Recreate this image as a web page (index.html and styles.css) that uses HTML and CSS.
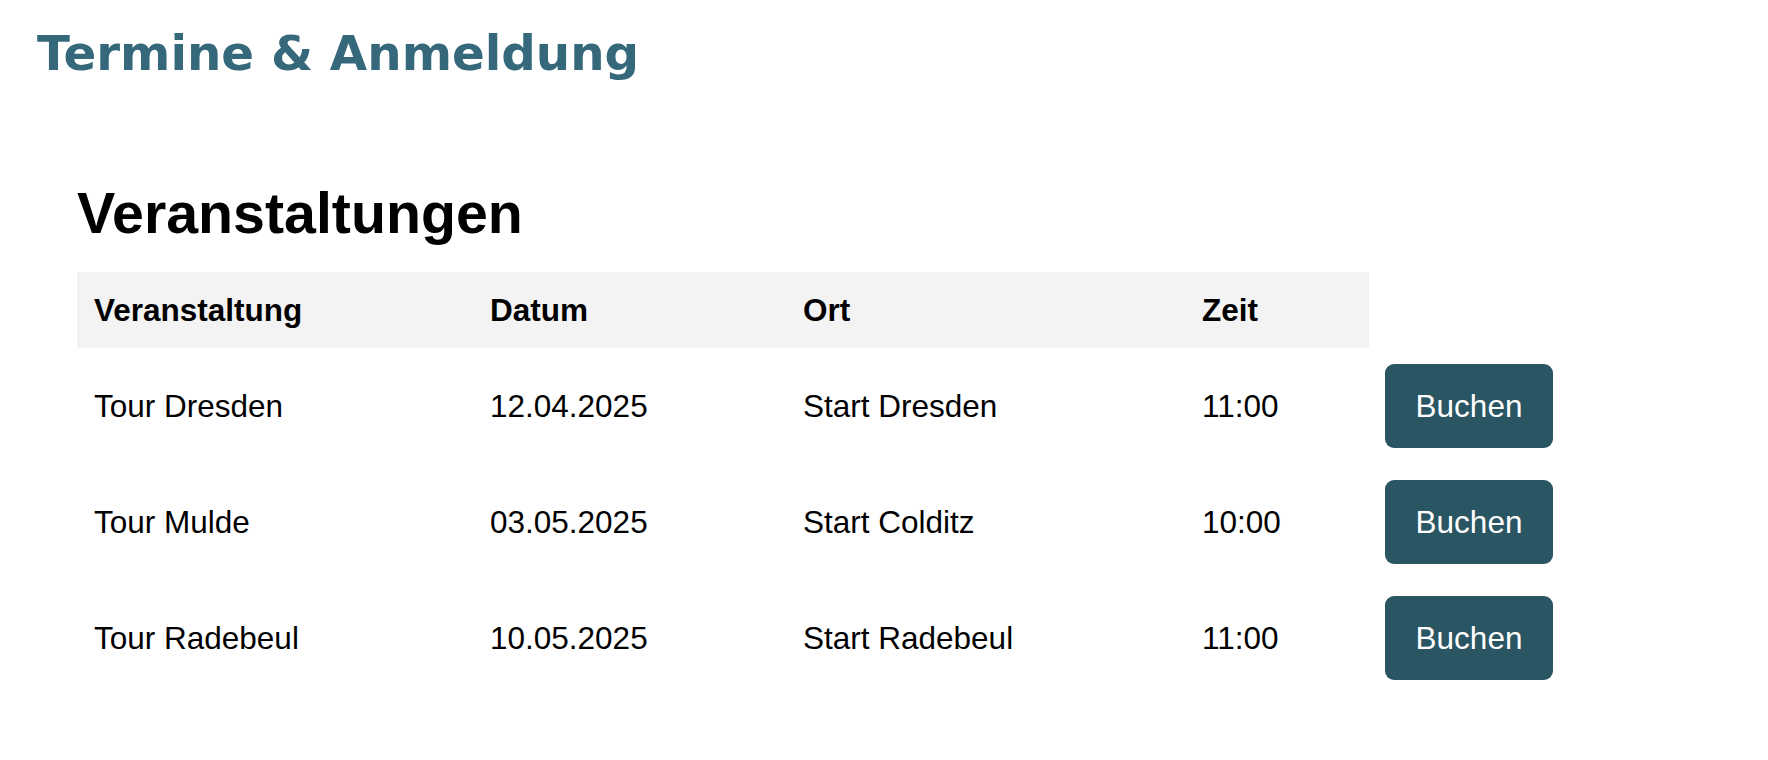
FILE: index.html
```html
<!DOCTYPE html>
<html lang="de">
<head>
<meta charset="utf-8">
<title>Termine &amp; Anmeldung</title>
<link rel="stylesheet" href="styles.css">
</head>
<body>
<header class="site-header">
  <h1 class="site-title">Termine &amp; Anmeldung</h1>
</header>
<main class="events">
  <h2 class="events-title">Veranstaltungen</h2>
  <table class="events-table">
    <colgroup>
      <col class="c1"><col class="c2"><col class="c3"><col class="c4"><col class="c5">
    </colgroup>
    <thead>
      <tr>
        <th>Veranstaltung</th>
        <th>Datum</th>
        <th>Ort</th>
        <th>Zeit</th>
        <th class="blank"></th>
      </tr>
    </thead>
    <tbody>
      <tr>
        <td>Tour Dresden</td>
        <td>12.04.2025</td>
        <td>Start Dresden</td>
        <td>11:00</td>
        <td class="action"><button class="book-btn">Buchen</button></td>
      </tr>
      <tr>
        <td>Tour Mulde</td>
        <td>03.05.2025</td>
        <td>Start Colditz</td>
        <td>10:00</td>
        <td class="action"><button class="book-btn">Buchen</button></td>
      </tr>
      <tr>
        <td>Tour Radebeul</td>
        <td>10.05.2025</td>
        <td>Start Radebeul</td>
        <td>11:00</td>
        <td class="action"><button class="book-btn">Buchen</button></td>
      </tr>
    </tbody>
  </table>
</main>
</body>
</html>
```

FILE: styles.css
```css
html, body {
  margin: 0;
  padding: 0;
  background: #ffffff;
}

body {
  font-family: "Liberation Sans", Arial, sans-serif;
  color: #000;
}

.site-header {
  padding: 25px 0 0 37px;
}

.site-title {
  margin: 0;
  font-family: "DejaVu Sans", sans-serif;
  font-weight: bold;
  font-size: 48.3px;
  line-height: 56px;
  color: #35687a;
}

.events {
  padding: 100px 0 0 77px;
}

.events-title {
  margin: 0 0 26px 0;
  font-family: "Liberation Sans", Arial, sans-serif;
  font-weight: bold;
  font-size: 57.3px;
  line-height: 65px;
}

.events-table {
  border-collapse: collapse;
  border-spacing: 0;
  table-layout: fixed;
  width: 1492px;
  font-size: 31.5px;
  line-height: 36px;
}

.c1 { width: 396px; }
.c2 { width: 313px; }
.c3 { width: 399px; }
.c4 { width: 184px; }
.c5 { width: 200px; }

.events-table th {
  background: #f3f3f3;
  font-weight: bold;
  text-align: left;
  padding: 20px 17px;
  vertical-align: middle;
}

.events-table th.blank {
  background: transparent;
}

.events-table td {
  padding: 16px 17px;
  text-align: left;
  vertical-align: middle;
}

.events-table td.action {
  padding-left: 16px;
}

.book-btn {
  display: block;
  border: none;
  margin: 0;
  background: #2a5562;
  color: #ffffff;
  font-family: "Liberation Sans", Arial, sans-serif;
  font-size: 31.5px;
  line-height: 36px;
  padding: 24px 30.6px;
  border-radius: 9px;
  cursor: pointer;
}
```
